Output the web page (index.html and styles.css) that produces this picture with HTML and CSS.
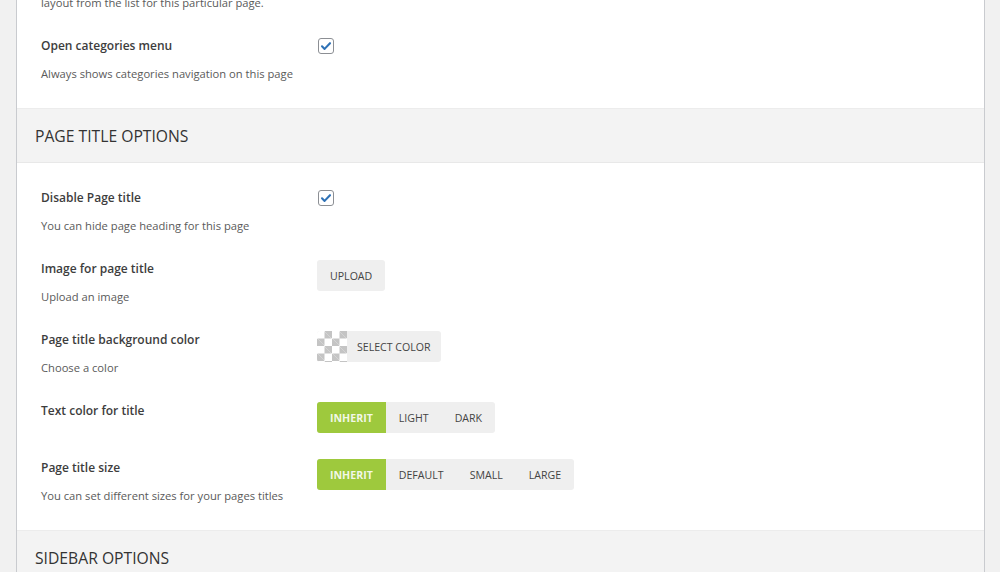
FILE: index.html
```html
<!DOCTYPE html>
<html>
<head>
<meta charset="utf-8">
<link rel="stylesheet" href="styles.css">
</head>
<body>
<div class="panel">
  <div class="section-body first">
    <div class="row">
      <div class="label-col">
        <div class="desc">layout from the list for this particular page.</div>
      </div>
    </div>
    <div class="row">
      <div class="label-col">
        <div class="label">Open categories menu</div>
        <div class="desc">Always shows categories navigation on this page</div>
      </div>
      <div class="control-col"><span class="checkbox"><svg viewBox="0 0 16 16" width="16" height="16"><path d="M4 8.3l2.6 2.6L12 5.2" fill="none" stroke="#2f72b6" stroke-width="2.1" stroke-linecap="round" stroke-linejoin="round"/></svg></span></div>
    </div>
  </div>

  <div class="section-head">PAGE TITLE OPTIONS</div>
  <div class="section-body">
    <div class="row">
      <div class="label-col">
        <div class="label">Disable Page title</div>
        <div class="desc">You can hide page heading for this page</div>
      </div>
      <div class="control-col"><span class="checkbox"><svg viewBox="0 0 16 16" width="16" height="16"><path d="M4 8.3l2.6 2.6L12 5.2" fill="none" stroke="#2f72b6" stroke-width="2.1" stroke-linecap="round" stroke-linejoin="round"/></svg></span></div>
    </div>
    <div class="row">
      <div class="label-col">
        <div class="label">Image for page title</div>
        <div class="desc">Upload an image</div>
      </div>
      <div class="control-col"><span class="btn">UPLOAD</span></div>
    </div>
    <div class="row">
      <div class="label-col">
        <div class="label">Page title background color</div>
        <div class="desc">Choose a color</div>
      </div>
      <div class="control-col"><span class="btn color-btn"><span class="checker"></span><span class="color-text">SELECT COLOR</span></span></div>
    </div>
    <div class="row">
      <div class="label-col">
        <div class="label">Text color for title</div>
      </div>
      <div class="control-col">
        <div class="group">
          <span class="opt active">INHERIT</span><span class="opt">LIGHT</span><span class="opt">DARK</span>
        </div>
      </div>
    </div>
    <div class="row">
      <div class="label-col">
        <div class="label">Page title size</div>
        <div class="desc">You can set different sizes for your pages titles</div>
      </div>
      <div class="control-col">
        <div class="group">
          <span class="opt active">INHERIT</span><span class="opt">DEFAULT</span><span class="opt">SMALL</span><span class="opt">LARGE</span>
        </div>
      </div>
    </div>
  </div>

  <div class="section-head">SIDEBAR OPTIONS</div>
  <div class="section-body"></div>
</div>
</body>
</html>
```

FILE: styles.css
```css
html, body {
  margin: 0;
  padding: 0;
  background: #f1f1f1;
  overflow: hidden;
  height: 572px;
}
body {
  font-family: "Open Sans", "Noto Sans", sans-serif;
  color: #333;
}
.panel {
  margin: -5px 0 0 16px;
  width: 967px;
  background: #fff;
  border-left: 1px solid #c9cbcf;
  border-right: 1px solid #c9cbcf;
}
.section-body {
  padding: 13px 0;
}
.section-body.first {
  padding-top: 0;
}
.section-body.first .row:first-child {
  padding-top: 0;
}
.row {
  display: flex;
  padding: 13px 0 13px 24px;
}
.label-col {
  width: 276px;
  flex: none;
}
.label {
  font-size: 12px;
  font-weight: 600;
  line-height: 18px;
  color: #3d3d3d;
}
.desc {
  font-size: 11.2px;
  line-height: 16px;
  color: #5a5a5a;
  margin-top: 11px;
}
.label-col .desc:first-child {
  margin-top: 0;
}
.control-col {
  display: flex;
  align-items: flex-start;
}
.checkbox {
  display: block;
  width: 14px;
  height: 14px;
  margin: 1px 0 0 1px;
  border: 1px solid #8c8f94;
  border-radius: 3px;
  background: #fff;
  position: relative;
}
.checkbox svg {
  position: absolute;
  left: -1px;
  top: -1px;
}
.btn {
  display: inline-flex;
  align-items: center;
  height: 31px;
  padding: 0 13px;
  background: #efefef;
  border-radius: 3px;
  font-size: 10.6px;
  font-weight: 500;
  color: #444;
  box-sizing: border-box;
}
.color-btn {
  padding: 0 10px 0 0;
  overflow: hidden;
}
.checker {
  width: 30px;
  height: 31px;
  margin-right: 10px;
  background-color: #fff;
  background-image:
    linear-gradient(45deg, #c4c4c4 25%, transparent 25%, transparent 75%, #c4c4c4 75%),
    linear-gradient(45deg, #c4c4c4 25%, transparent 25%, transparent 75%, #c4c4c4 75%);
  background-size: 15px 15px;
  background-position: 0 0, 7.5px 7.5px;
}
.group {
  display: flex;
  height: 31px;
  border-radius: 3px;
  overflow: hidden;
  background: #efefef;
}
.opt {
  display: flex;
  align-items: center;
  padding: 0 13px;
  font-size: 10.6px;
  color: #444;
}
.opt.active {
  background: #9ec93d;
  color: rgba(255,255,255,0.88);
  font-weight: 700;
}
.section-head {
  height: 55px;
  box-sizing: border-box;
  padding-left: 18px;
  display: flex;
  align-items: center;
  background: #f3f3f3;
  border-top: 1px solid #ececec;
  border-bottom: 1px solid #e8e8e8;
  font-size: 15.7px;
  color: #333;
}
```
